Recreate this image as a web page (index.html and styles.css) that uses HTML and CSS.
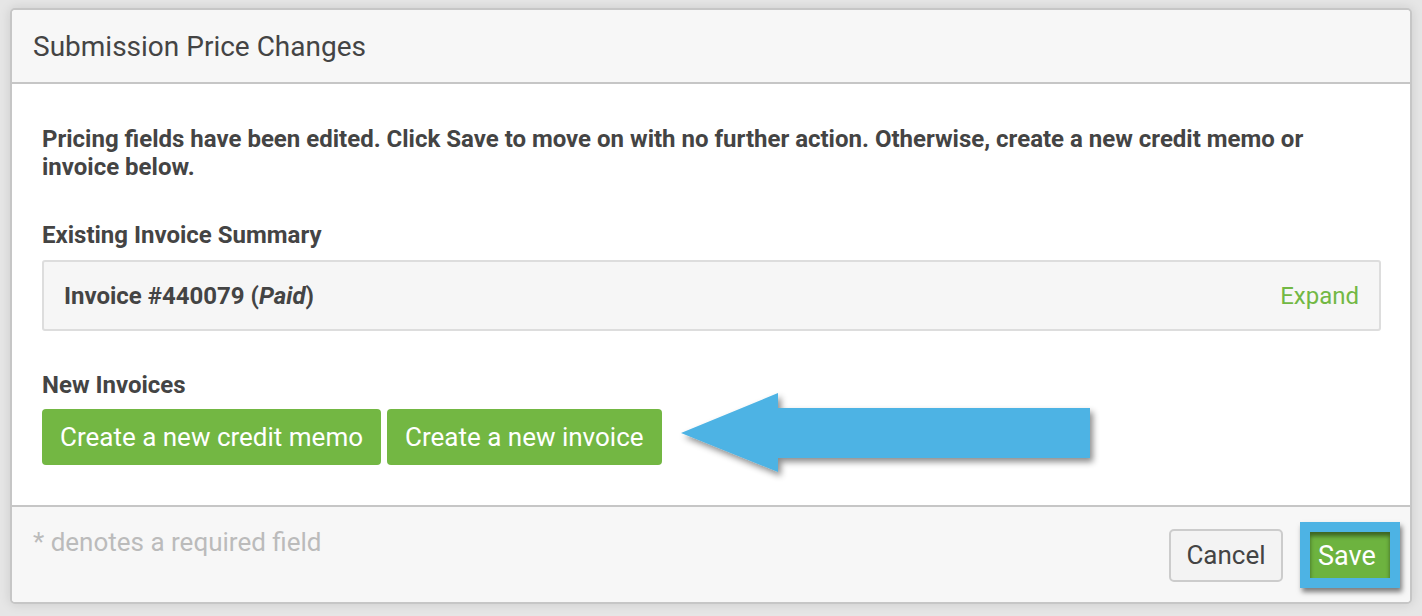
FILE: index.html
```html
<!DOCTYPE html>
<html>
<head>
<meta charset="utf-8">
<link rel="stylesheet" href="styles.css">
</head>
<body>
<div class="modal">
  <div class="modal-header">Submission Price Changes</div>
  <div class="modal-body">
    <p class="notice">Pricing fields have been edited. Click Save to move on with no further action. Otherwise, create a new credit memo or invoice below.</p>
    <div class="section-label">Existing Invoice Summary</div>
    <div class="invoice-box">
      <span class="invoice-name">Invoice #440079 (<em>Paid</em>)</span>
      <a class="expand">Expand</a>
    </div>
    <div class="section-label">New Invoices</div>
    <div class="btn-row">
      <button class="btn-green">Create a new credit memo</button>
      <button class="btn-green">Create a new invoice</button>
      <svg class="arrow" width="430" height="100" viewBox="0 0 430 100">
        <defs>
          <filter id="sh" x="-10%" y="-20%" width="130%" height="160%">
            <feDropShadow dx="3" dy="4" stdDeviation="3" flood-color="#000" flood-opacity="0.45"/>
          </filter>
        </defs>
        <polygon points="2,44 99,4 99,19 411,19 411,69 99,69 99,83" fill="#4db3e4" filter="url(#sh)"/>
      </svg>
    </div>
  </div>
  <div class="modal-footer">
    <span class="required-note">* denotes a required field</span>
    <div class="footer-actions">
      <button class="btn-cancel">Cancel</button>
      <div class="highlight">
        <button class="btn-save">Save</button>
      </div>
    </div>
  </div>
</div>
</body>
</html>
```

FILE: styles.css
```css
html, body {
  margin: 0;
  padding: 0;
}
body {
  background: #e6e6e6;
  font-family: Roboto, "Liberation Sans", sans-serif;
  color: #444;
  padding: 8px 10px 0 10px;
  height: 616px;
  box-sizing: border-box;
}
.modal {
  width: 1402px;
  height: 596px;
  box-sizing: border-box;
  border: 2px solid #c6c6c6;
  border-radius: 5px;
  background: #fff;
  box-shadow: 0 0 12px rgba(0,0,0,0.12);
  display: flex;
  flex-direction: column;
  overflow: visible;
}
.modal-header {
  height: 74px;
  box-sizing: border-box;
  background: #f7f7f7;
  border-bottom: 2px solid #c6c6c6;
  border-radius: 4px 4px 0 0;
  padding-left: 21px;
  font-size: 28px;
  line-height: 73px;
  color: #444;
}
.modal-body {
  padding: 41px 29px 40px 30px;
  border-bottom: 2px solid #c6c6c6;
}
.notice {
  margin: 0 0 40px 0;
  font-size: 24px;
  font-weight: bold;
  line-height: 28px;
  color: #444;
  padding-right: 40px;
}
.section-label {
  font-size: 24px;
  font-weight: bold;
  line-height: 28px;
  margin-bottom: 11px;
}
.invoice-box {
  height: 71px;
  box-sizing: border-box;
  background: #f6f6f6;
  border: 2px solid #ddd;
  border-radius: 3px;
  display: flex;
  align-items: center;
  justify-content: space-between;
  padding: 0 20px 0 20px;
  margin-bottom: 40px;
  font-size: 24px;
}
.invoice-name {
  font-weight: bold;
}
.expand {
  color: #72b844;
  font-size: 24px;
  font-weight: normal;
}
.btn-row {
  display: flex;
  gap: 6px;
  position: relative;
  margin-top: -1px;
}
.btn-green {
  height: 56px;
  border: none;
  border-radius: 4px;
  background: #73b743;
  color: #fff;
  font-family: Roboto, "Liberation Sans", sans-serif;
  font-size: 26px;
  padding: 0 18px;
}
.arrow {
  position: absolute;
  left: 637px;
  top: -20px;
}
.modal-footer {
  flex: 1;
  background: #f7f7f7;
  border-radius: 0 0 4px 4px;
  display: flex;
  justify-content: space-between;
  align-items: flex-start;
  padding: 21px 10px 0 21px;
}
.required-note {
  font-size: 26px;
  line-height: 28px;
  color: #bbb;
}
.footer-actions {
  display: flex;
  align-items: center;
  gap: 17px;
  margin-top: -6px;
}
.btn-cancel {
  width: 114px;
  height: 53px;
  background: #f3f3f3;
  border: 2px solid #ccc;
  border-radius: 5px;
  font-family: Roboto, "Liberation Sans", sans-serif;
  font-size: 26px;
  color: #444;
}
.highlight {
  border: 10px solid #4db3e4;
  box-shadow: 2px 4px 5px rgba(0,0,0,0.5);
}
.btn-save {
  display: block;
  width: 80px;
  height: 46px;
  border: none;
  background: #6db33f;
  box-shadow: inset 0 4px 4px rgba(0,0,0,0.45);
  color: #fff;
  font-family: Roboto, "Liberation Sans", sans-serif;
  font-size: 27px;
  padding: 2px 0 0 0;
  text-align: left;
  padding-left: 8px;
}
```
